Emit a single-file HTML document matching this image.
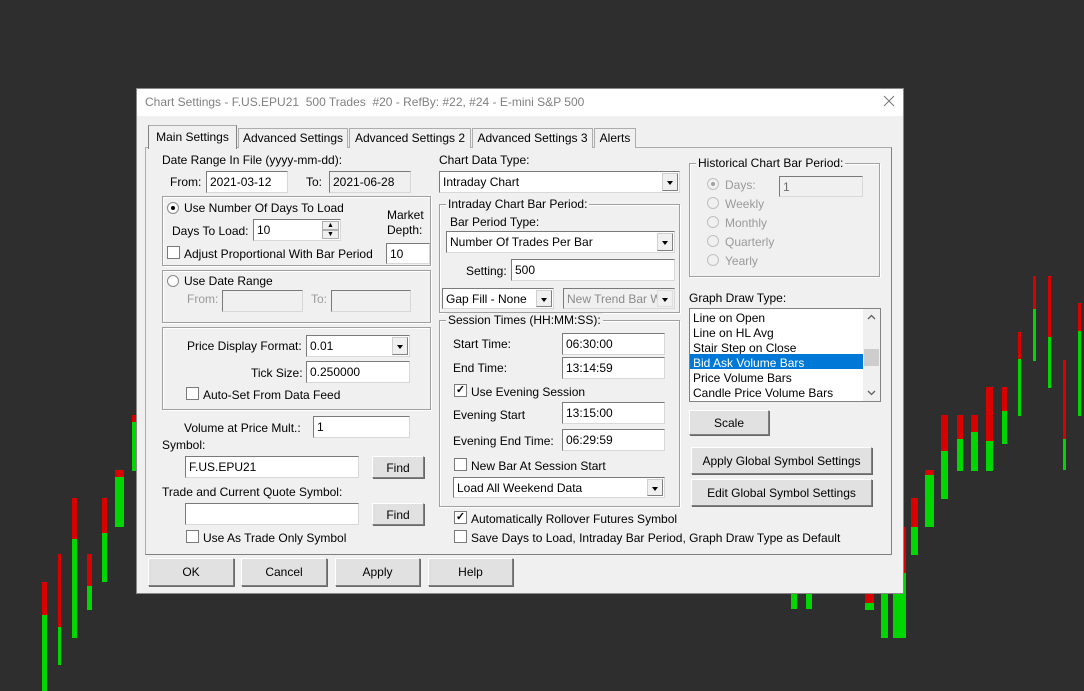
<!DOCTYPE html>
<html><head><meta charset="utf-8"><style>
*{box-sizing:border-box;margin:0;padding:0}
body{width:1084px;height:691px;background:#2e2e2e;position:relative;overflow:hidden;font-family:"Liberation Sans",sans-serif;font-size:12px;color:#000}
.b{position:absolute}
.r{background:#d90000}.g{background:#00d600}
.t{position:absolute;white-space:nowrap;line-height:14px}
.in{position:absolute;background:#fff;border:1px solid #7a7a7a;border-right-color:#d8d8d8;border-bottom-color:#d8d8d8;padding:3px 3px 0;line-height:15px;white-space:nowrap;overflow:hidden}
.dis{background:#f0f0f0;color:#6d6d6d}
.cb{position:absolute;background:#fff;border:1px solid #7a7a7a;border-right-color:#d8d8d8;border-bottom-color:#d8d8d8;padding:3px 3px 0;line-height:15px;white-space:nowrap;overflow:hidden}
.cb .ar{position:absolute;right:1px;top:1px;bottom:1px;width:16px;background:#f0f0f0;border:1px solid #d0d0d0;border-right-color:#808080;border-bottom-color:#808080}
.cb .ar:after{content:"";position:absolute;left:4px;top:7px;border-left:3px solid transparent;border-right:3px solid transparent;border-top:4px solid #000}
.btn{position:absolute;background:#e1e1e1;border:1px solid #fff;border-right-color:#808080;border-bottom-color:#808080;box-shadow:1px 1px 0 #696969;text-align:center;line-height:22px;font-size:12px}
.grp{position:absolute;border:1px solid #a0a0a0;box-shadow:inset 1px 1px 0 #fff,1px 1px 0 #fff}
.lg{position:absolute;background:#f0f0f0;padding:0 2px;line-height:14px;white-space:nowrap}
.chk{position:absolute;width:13px;height:13px;background:#fff;border:1px solid #7a7a7a;font-size:11px;line-height:11px;text-align:center;font-weight:bold}
.rad{position:absolute;width:12px;height:12px;border-radius:50%;background:#fff;border:1px solid #8a8a8a}
.rad.on:after{content:"";position:absolute;left:3px;top:3px;width:4px;height:4px;border-radius:50%;background:#000}
.rad.d{background:#f0f0f0;border-color:#c0c0c0}
.rad.d.on:after{background:#a0a0a0}
.gr{color:#9a9a9a}
.tab{position:absolute;background:#f0f0f0;border:1px solid #adadad;border-bottom:none;text-align:center;line-height:18px;white-space:nowrap}
</style></head><body>
<!-- left bars -->
<div class="b r" style="left:42px;top:582px;width:5px;height:33px"></div><div class="b g" style="left:42px;top:615px;width:5px;height:76px"></div>
<div class="b r" style="left:58px;top:554px;width:3px;height:73px"></div><div class="b g" style="left:58px;top:627px;width:3px;height:38px"></div>
<div class="b r" style="left:72px;top:498px;width:5px;height:41px"></div><div class="b g" style="left:72px;top:539px;width:5px;height:99px"></div>
<div class="b r" style="left:87px;top:554px;width:5px;height:32px"></div><div class="b g" style="left:87px;top:586px;width:5px;height:24px"></div>
<div class="b r" style="left:102px;top:498px;width:5px;height:35px"></div><div class="b g" style="left:102px;top:533px;width:5px;height:49px"></div>
<div class="b r" style="left:115px;top:470px;width:9px;height:7px"></div><div class="b g" style="left:115px;top:477px;width:9px;height:50px"></div>
<div class="b r" style="left:132px;top:415px;width:4px;height:7px"></div><div class="b g" style="left:132px;top:422px;width:4px;height:49px"></div>
<!-- right bars -->
<div class="b g" style="left:791px;top:590px;width:6px;height:19px"></div>
<div class="b g" style="left:806px;top:590px;width:6px;height:19px"></div>
<div class="b r" style="left:865px;top:590px;width:9px;height:13px"></div><div class="b g" style="left:865px;top:603px;width:9px;height:7px"></div>
<div class="b g" style="left:881px;top:590px;width:7px;height:48px"></div>
<div class="b r" style="left:903px;top:527px;width:3px;height:46px"></div><div class="b g" style="left:893px;top:573px;width:13px;height:65px"></div>
<div class="b r" style="left:911px;top:498px;width:7px;height:29px"></div><div class="b g" style="left:911px;top:527px;width:7px;height:28px"></div>
<div class="b r" style="left:925px;top:470px;width:9px;height:5px"></div><div class="b g" style="left:925px;top:475px;width:9px;height:52px"></div>
<div class="b r" style="left:941px;top:415px;width:7px;height:36px"></div><div class="b g" style="left:941px;top:451px;width:7px;height:48px"></div>
<div class="b r" style="left:957px;top:415px;width:6px;height:24px"></div><div class="b g" style="left:957px;top:439px;width:6px;height:32px"></div>
<div class="b r" style="left:971px;top:415px;width:7px;height:17px"></div><div class="b g" style="left:971px;top:432px;width:7px;height:39px"></div>
<div class="b r" style="left:986px;top:387px;width:7px;height:54px"></div><div class="b g" style="left:986px;top:441px;width:7px;height:30px"></div>
<div class="b r" style="left:1002px;top:387px;width:5px;height:24px"></div><div class="b g" style="left:1002px;top:411px;width:5px;height:33px"></div>
<div class="b r" style="left:1018px;top:332px;width:3px;height:27px"></div><div class="b g" style="left:1018px;top:359px;width:3px;height:57px"></div>
<div class="b r" style="left:1033px;top:276px;width:3px;height:33px"></div><div class="b g" style="left:1033px;top:309px;width:3px;height:52px"></div>
<div class="b r" style="left:1048px;top:276px;width:3px;height:61px"></div><div class="b g" style="left:1048px;top:337px;width:3px;height:51px"></div>
<div class="b r" style="left:1063px;top:360px;width:3px;height:79px"></div><div class="b g" style="left:1063px;top:439px;width:3px;height:31px"></div>
<div class="b r" style="left:1078px;top:303px;width:3px;height:28px"></div><div class="b g" style="left:1078px;top:331px;width:3px;height:85px"></div>

<!-- dialog -->
<div class="b" style="left:136px;top:88px;width:768px;height:506px;background:#f0f0f0;border:1px solid #888"></div>
<div class="b" style="left:137px;top:89px;width:766px;height:27px;background:#fff"></div>
<div class="t" style="left:145px;top:95px;color:#808080;font-size:12px">Chart Settings - F.US.EPU21&nbsp; 500 Trades&nbsp; #20 - RefBy: #22, #24 - E-mini S&amp;P 500</div>
<svg class="b" style="left:883px;top:95px" width="12" height="12" viewBox="0 0 12 12"><path d="M1 1L11 11M11 1L1 11" stroke="#777" stroke-width="1"/></svg>

<!-- tab panel -->
<div class="b" style="left:145px;top:147px;width:747px;height:408px;border:1px solid #adadad;border-right-color:#808080;border-bottom-color:#808080;background:#f0f0f0"></div>
<div class="tab" style="left:238px;top:128px;width:110px;height:20px">Advanced Settings</div>
<div class="tab" style="left:349px;top:128px;width:122px;height:20px">Advanced Settings 2</div>
<div class="tab" style="left:472px;top:128px;width:121px;height:20px">Advanced Settings 3</div>
<div class="tab" style="left:594px;top:128px;width:42px;height:20px">Alerts</div>
<div class="tab" style="left:148px;top:125px;width:89px;height:24px;line-height:22px;border-color:#adadad #808080">Main Settings</div>

<!-- left column -->
<div class="t" style="left:162px;top:153px">Date Range In File (yyyy-mm-dd):</div>
<div class="t" style="left:170px;top:175px">From:</div>
<div class="in" style="left:206px;top:171px;width:82px;height:22px">2021-03-12</div>
<div class="t" style="left:306px;top:175px">To:</div>
<div class="in" style="left:329px;top:171px;width:82px;height:22px;background:#f0f0f0">2021-06-28</div>

<div class="grp" style="left:162px;top:196px;width:269px;height:70px"></div>
<div class="rad on" style="left:167px;top:202px"></div>
<div class="t" style="left:184px;top:201px">Use Number Of Days To Load</div>
<div class="t" style="left:387px;top:208px">Market</div>
<div class="t" style="left:387px;top:223px">Depth:</div>
<div class="t" style="left:172px;top:224px">Days To Load:</div>
<div class="in" style="left:253px;top:219px;width:88px;height:22px">10</div>
<div class="b" style="left:322px;top:221px;width:17px;height:9px;background:#f0f0f0;border:1px solid #b0b0b0;font-size:7px;line-height:7px;text-align:center">▲</div>
<div class="b" style="left:322px;top:230px;width:17px;height:9px;background:#f0f0f0;border:1px solid #b0b0b0;font-size:7px;line-height:7px;text-align:center">▼</div>
<div class="chk" style="left:167px;top:246px"></div>
<div class="t" style="left:184px;top:247px">Adjust Proportional With Bar Period</div>
<div class="in" style="left:386px;top:243px;width:44px;height:21px">10</div>

<div class="grp" style="left:162px;top:270px;width:269px;height:53px"></div>
<div class="rad" style="left:167px;top:275px"></div>
<div class="t" style="left:184px;top:274px">Use Date Range</div>
<div class="t gr" style="left:187px;top:292px">From:</div>
<div class="in dis" style="left:222px;top:290px;width:81px;height:22px"></div>
<div class="t gr" style="left:311px;top:292px">To:</div>
<div class="in dis" style="left:331px;top:290px;width:80px;height:22px"></div>

<div class="grp" style="left:162px;top:327px;width:269px;height:83px"></div>
<div class="t" style="left:187px;top:339px">Price Display Format:</div>
<div class="cb" style="left:306px;top:335px;width:104px;height:22px">0.01<div class="ar"></div></div>
<div class="t" style="left:251px;top:366px">Tick Size:</div>
<div class="in" style="left:306px;top:361px;width:104px;height:22px">0.250000</div>
<div class="chk" style="left:186px;top:387px"></div>
<div class="t" style="left:203px;top:388px">Auto-Set From Data Feed</div>

<div class="t" style="left:184px;top:421px">Volume at Price Mult.:</div>
<div class="in" style="left:313px;top:416px;width:97px;height:22px">1</div>
<div class="t" style="left:162px;top:438px">Symbol:</div>
<div class="in" style="left:185px;top:456px;width:174px;height:22px">F.US.EPU21</div>
<div class="btn" style="left:372px;top:456px;width:52px;height:22px">Find</div>
<div class="t" style="left:162px;top:485px">Trade and Current Quote Symbol:</div>
<div class="in" style="left:185px;top:503px;width:174px;height:22px"></div>
<div class="btn" style="left:372px;top:503px;width:52px;height:22px">Find</div>
<div class="chk" style="left:186px;top:530px"></div>
<div class="t" style="left:203px;top:531px">Use As Trade Only Symbol</div>

<!-- middle column -->
<div class="t" style="left:439px;top:153px">Chart Data Type:</div>
<div class="cb" style="left:439px;top:171px;width:241px;height:22px">Intraday Chart<div class="ar"></div></div>
<div class="grp" style="left:439px;top:204px;width:241px;height:109px"></div>
<div class="lg" style="left:446px;top:197px">Intraday Chart Bar Period:</div>
<div class="t" style="left:450px;top:215px">Bar Period Type:</div>
<div class="cb" style="left:446px;top:231px;width:229px;height:22px">Number Of Trades Per Bar<div class="ar"></div></div>
<div class="t" style="left:466px;top:264px">Setting:</div>
<div class="in" style="left:511px;top:259px;width:164px;height:22px">500</div>
<div class="cb" style="left:442px;top:288px;width:112px;height:21px">Gap Fill - None<div class="ar"></div></div>
<div class="cb" style="left:563px;top:288px;width:112px;height:21px;background:#f0f0f0;color:#8a8a8a">New Trend Bar W<div class="ar" style="border-color:#ddd"></div></div>

<div class="grp" style="left:439px;top:320px;width:241px;height:187px"></div>
<div class="lg" style="left:446px;top:313px">Session Times (HH:MM:SS):</div>
<div class="t" style="left:453px;top:337px">Start Time:</div>
<div class="in" style="left:562px;top:333px;width:103px;height:22px">06:30:00</div>
<div class="t" style="left:453px;top:361px">End Time:</div>
<div class="in" style="left:562px;top:357px;width:103px;height:22px">13:14:59</div>
<div class="chk" style="left:454px;top:384px">✓</div>
<div class="t" style="left:471px;top:385px">Use Evening Session</div>
<div class="t" style="left:453px;top:408px">Evening Start</div>
<div class="in" style="left:562px;top:402px;width:103px;height:22px">13:15:00</div>
<div class="t" style="left:453px;top:434px">Evening End Time:</div>
<div class="in" style="left:562px;top:429px;width:103px;height:22px">06:29:59</div>
<div class="chk" style="left:454px;top:458px"></div>
<div class="t" style="left:471px;top:459px">New Bar At Session Start</div>
<div class="cb" style="left:453px;top:477px;width:212px;height:21px">Load All Weekend Data<div class="ar"></div></div>
<div class="chk" style="left:454px;top:511px">✓</div>
<div class="t" style="left:471px;top:512px">Automatically Rollover Futures Symbol</div>
<div class="chk" style="left:454px;top:530px"></div>
<div class="t" style="left:471px;top:531px">Save Days to Load, Intraday Bar Period, Graph Draw Type as Default</div>

<!-- right column -->
<div class="grp" style="left:689px;top:163px;width:191px;height:114px"></div>
<div class="lg" style="left:696px;top:156px">Historical Chart Bar Period:</div>
<div class="rad d on" style="left:707px;top:178px"></div><div class="t gr" style="left:725px;top:178px">Days:</div>
<div class="in dis" style="left:779px;top:176px;width:84px;height:21px">1</div>
<div class="rad d" style="left:707px;top:197px"></div><div class="t gr" style="left:725px;top:197px">Weekly</div>
<div class="rad d" style="left:707px;top:216px"></div><div class="t gr" style="left:725px;top:216px">Monthly</div>
<div class="rad d" style="left:707px;top:235px"></div><div class="t gr" style="left:725px;top:235px">Quarterly</div>
<div class="rad d" style="left:707px;top:254px"></div><div class="t gr" style="left:725px;top:254px">Yearly</div>

<div class="t" style="left:689px;top:291px">Graph Draw Type:</div>
<div class="b" style="left:689px;top:308px;width:192px;height:94px;background:#fff;border:1px solid #828282"></div>
<div class="t" style="left:693px;top:311px">Line on Open</div>
<div class="t" style="left:693px;top:326px">Line on HL Avg</div>
<div class="t" style="left:693px;top:341px">Stair Step on Close</div>
<div class="b" style="left:690px;top:354px;width:173px;height:15px;background:#0078d7"></div>
<div class="t" style="left:693px;top:356px;color:#fff">Bid Ask Volume Bars</div>
<div class="t" style="left:693px;top:371px">Price Volume Bars</div>
<div class="t" style="left:693px;top:386px">Candle Price Volume Bars</div>
<div class="b" style="left:863px;top:309px;width:17px;height:92px;background:#f0f0f0"></div>
<div class="b" style="left:864px;top:349px;width:15px;height:17px;background:#cdcdcd"></div>
<svg class="b" style="left:867px;top:314px" width="9" height="6"><path d="M1 5L4.5 1.5L8 5" stroke="#606060" fill="none" stroke-width="1.3"/></svg>
<svg class="b" style="left:867px;top:390px" width="9" height="6"><path d="M1 1L4.5 4.5L8 1" stroke="#606060" fill="none" stroke-width="1.3"/></svg>

<div class="btn" style="left:689px;top:410px;width:80px;height:25px;line-height:24px">Scale</div>
<div class="btn" style="left:691px;top:447px;width:181px;height:27px;line-height:26px">Apply Global Symbol Settings</div>
<div class="btn" style="left:691px;top:479px;width:181px;height:27px;line-height:26px">Edit Global Symbol Settings</div>

<!-- bottom buttons -->
<div class="btn" style="left:148px;top:558px;width:86px;height:28px;line-height:27px">OK</div>
<div class="btn" style="left:241px;top:558px;width:86px;height:28px;line-height:27px">Cancel</div>
<div class="btn" style="left:335px;top:558px;width:85px;height:28px;line-height:27px">Apply</div>
<div class="btn" style="left:428px;top:558px;width:85px;height:28px;line-height:27px">Help</div>
</body></html>
